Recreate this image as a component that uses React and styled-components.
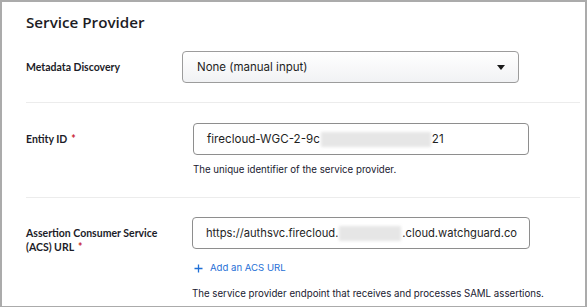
import React from 'react';
import styled, { createGlobalStyle } from 'styled-components';

const GlobalStyle = createGlobalStyle`
  html, body {
    margin: 0;
    padding: 0;
    background: #ffffff;
  }
  body {
    font-family: Inter, "Liberation Sans", sans-serif;
  }
`;

const Frame = styled.div`
  box-sizing: border-box;
  width: 587px;
  height: 307px;
  border: 2px solid #ababab;
  border-bottom-width: 1px;
  padding: 10px 5px 0 24px;
  overflow: hidden;
  background: #fff;
`;

const Heading = styled.h2`
  margin: 0;
  font-family: "Open Sans", sans-serif;
  font-weight: 600;
  font-size: 15.2px;
  line-height: 20px;
  color: #1c1c24;
`;

const Row = styled.div`
  display: grid;
  grid-template-columns: 156px 1fr;
  padding: ${props => props.pad || '20px 0 20px'};
  border-bottom: ${props => (props.last ? 'none' : '1px solid #ececec')};
`;

const Label = styled.div`
  padding-top: 9px;
  font-family: Lato, "Open Sans", sans-serif;
  font-weight: 700;
  font-size: 10.5px;
  line-height: 14px;
  color: #1c1c28;

  & .req {
    color: #c8232c;
    margin-left: 4px;
  }
`;

const Field = styled.div`
  display: flex;
  flex-direction: column;
  align-items: flex-start;
  margin-left: ${props => props.offset || 0}px;
`;

const SelectBox = styled.div`
  box-sizing: border-box;
  width: 337px;
  height: 32px;
  display: flex;
  align-items: center;
  justify-content: space-between;
  padding: 0 13px 0 14px;
  border: 1px solid #9c9c9c;
  border-radius: 4px;
  background: linear-gradient(#ffffff, #f1f2f4);
  font-size: 11.5px;
  color: #1f1f1f;
`;

const Caret = styled.span`
  width: 0;
  height: 0;
  border-left: 4px solid transparent;
  border-right: 4px solid transparent;
  border-top: 5px solid #1a1a1a;
`;

const TextBox = styled.div`
  box-sizing: border-box;
  width: ${props => props.w}px;
  height: 32px;
  display: flex;
  align-items: center;
  padding: 0 13px;
  border: 1px solid #8e8e8e;
  border-radius: 4px;
  background: #fff;
  font-size: ${props => props.size || 11.6}px;
  color: #1f1f1f;
  white-space: nowrap;
  overflow: hidden;
`;

const Blur = styled.span`
  display: inline-block;
  flex-shrink: 0;
  width: ${props => props.w}px;
  height: 15px;
  background: #e6e6e6;
  filter: blur(1.5px);
  margin: 0 1px;
`;

const Helper = styled.div`
  margin-top: ${props => props.gap || 8}px;
  font-size: 9.7px;
  line-height: 14px;
  color: #202030;
`;

const AddLink = styled.a`
  margin-top: 11px;
  display: flex;
  align-items: center;
  gap: 7px;
  padding-left: 2px;
  font-size: 9.6px;
  line-height: 16px;
  color: #1f6fd6;
  text-decoration: none;
  cursor: pointer;
`;

function Plus() {
  return (
    <svg width="9" height="9" viewBox="0 0 9 9">
      <path d="M4.5 0.5v8M0.5 4.5h8" stroke="#1f6fd6" strokeWidth="1.3" fill="none" />
    </svg>
  );
}

export default function App() {
  return (
    <>
      <GlobalStyle />
      <Frame>
        <Heading>Service Provider</Heading>
        <Row pad="19px 0 19px">
          <Label>Metadata Discovery</Label>
          <Field>
            <SelectBox>
              <span>None (manual input)</span>
              <Caret />
            </SelectBox>
          </Field>
        </Row>
        <Row pad="20px 0 20px">
          <Label>
            Entity ID<span className="req">*</span>
          </Label>
          <Field offset={11}>
            <TextBox w={336}>
              firecloud-WGC-2-9c<Blur w={110} />21
            </TextBox>
            <Helper>The unique identifier of the service provider.</Helper>
          </Field>
        </Row>
        <Row pad="19px 0 0" last>
          <Label>
            Assertion Consumer Service
            <br />
            (ACS) URL<span className="req">*</span>
          </Label>
          <Field offset={10}>
            <TextBox w={338} size={11.2}>
              https://authsvc.firecloud.<Blur w={62} />.cloud.watchguard.co
            </TextBox>
            <AddLink>
              <Plus />
              Add an ACS URL
            </AddLink>
            <Helper gap={11}>The service provider endpoint that receives and processes SAML assertions.</Helper>
          </Field>
        </Row>
      </Frame>
    </>
  );
}
